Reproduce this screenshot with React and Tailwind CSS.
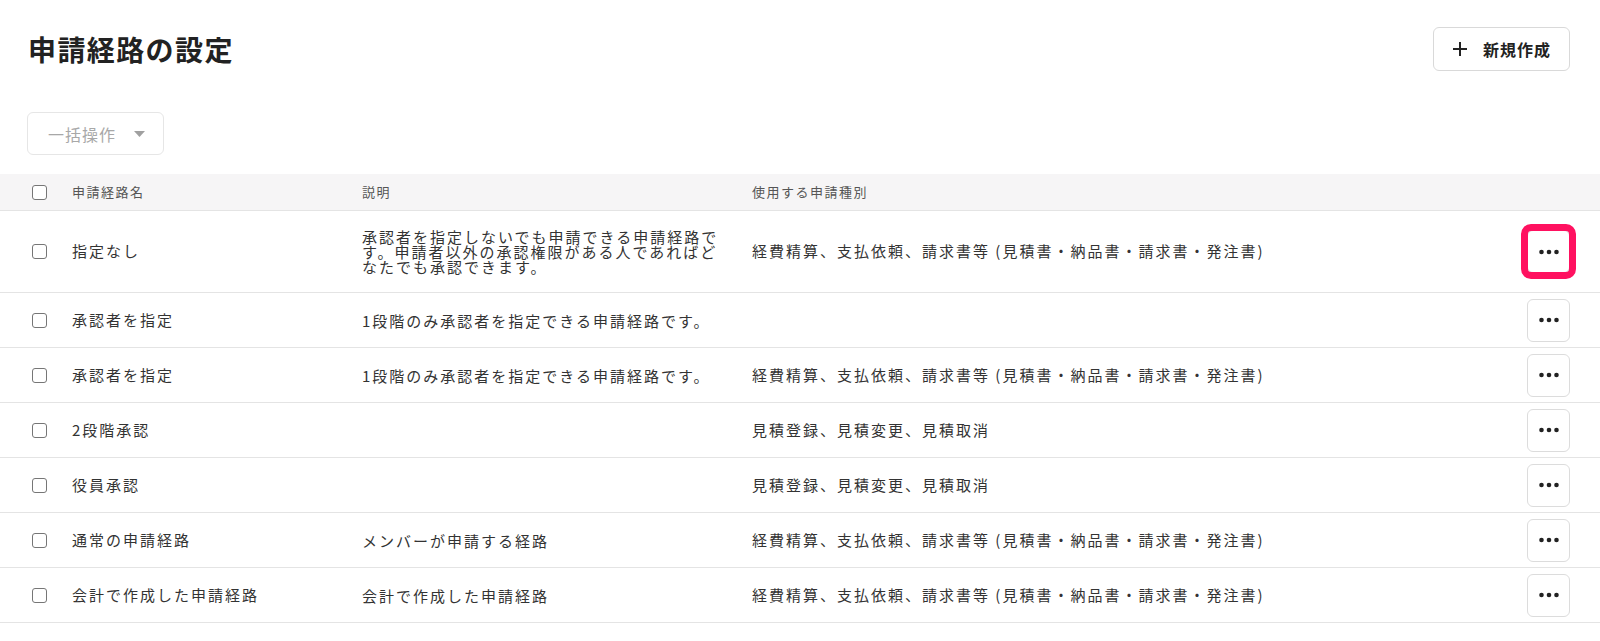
import React from "react";

const font = { fontFamily: '"Noto Sans CJK JP", "Noto Sans", sans-serif' };

const rows = [
  {
    name: "指定なし",
    desc: "承認者を指定しないでも申請できる申請経路です。申請者以外の承認権限がある人であればどなたでも承認できます。",
    type: "経費精算、支払依頼、請求書等 (見積書・納品書・請求書・発注書)",
    tall: true,
    highlight: true,
  },
  { name: "承認者を指定", desc: "1段階のみ承認者を指定できる申請経路です。", type: "" },
  {
    name: "承認者を指定",
    desc: "1段階のみ承認者を指定できる申請経路です。",
    type: "経費精算、支払依頼、請求書等 (見積書・納品書・請求書・発注書)",
  },
  { name: "2段階承認", desc: "", type: "見積登録、見積変更、見積取消" },
  { name: "役員承認", desc: "", type: "見積登録、見積変更、見積取消" },
  {
    name: "通常の申請経路",
    desc: "メンバーが申請する経路",
    type: "経費精算、支払依頼、請求書等 (見積書・納品書・請求書・発注書)",
  },
  {
    name: "会計で作成した申請経路",
    desc: "会計で作成した申請経路",
    type: "経費精算、支払依頼、請求書等 (見積書・納品書・請求書・発注書)",
  },
];

function Checkbox() {
  return (
    <div className="w-[15px] h-[15px] shrink-0 rounded-[3px] border-[1.5px] border-[#767676] bg-white" />
  );
}

function Dots() {
  return (
    <svg width="20" height="6" viewBox="0 0 20 6">
      <circle cx="2.5" cy="3" r="2.3" fill="#222" />
      <circle cx="10" cy="3" r="2.3" fill="#222" />
      <circle cx="17.5" cy="3" r="2.3" fill="#222" />
    </svg>
  );
}

export default function App() {
  return (
    <div className="w-[1600px] h-[641px] bg-white text-[#333] overflow-hidden" style={font}>
      <div className="flex items-center justify-between pl-[28px] pr-[30px] pt-[27px]">
        <h1 className="text-[28px] leading-[44px] font-bold tracking-[1.4px] text-[#222]">
          申請経路の設定
        </h1>
        <button className="flex items-center h-[44px] w-[137px] pl-[18px] rounded-[6px] border border-[#d9d9d9] bg-white">
          <svg width="16" height="16" viewBox="0 0 16 16" className="shrink-0">
            <path d="M8 1v14M1 8h14" stroke="#222" strokeWidth="2" />
          </svg>
          <span className="ml-[15px] text-[16px] font-bold tracking-[1px] text-[#222]">新規作成</span>
        </button>
      </div>

      <div className="pl-[27px] mt-[41px]">
        <button className="flex items-center h-[43px] w-[137px] pl-[20px] rounded-[6px] border border-[#e6e6e6] bg-white">
          <span className="text-[16px] tracking-[1px] text-[#a8a8a8]">一括操作</span>
          <svg width="11" height="6" viewBox="0 0 11 6" className="ml-[18px]">
            <path d="M0 0h11L5.5 6z" fill="#a0a0a0" />
          </svg>
        </button>
      </div>

      <div className="mt-[19px]">
        <div className="flex items-center h-[37px] border-b border-[#e4e4e4] bg-[#f6f5f6] pl-[32px] pr-[30px] text-[13px] tracking-[1.5px] text-[#555]">
          <Checkbox />
          <div className="w-[290px] ml-[25px]">申請経路名</div>
          <div className="w-[390px]">説明</div>
          <div className="flex-1">使用する申請種別</div>
        </div>
        {rows.map((r, i) => (
          <div
            key={i}
            className={
              "flex items-center border-b border-[#e4e4e4] pl-[32px] pr-[30px] text-[15px] tracking-[2px] " +
              (r.tall ? "h-[82px]" : "h-[55px]")
            }
          >
            <Checkbox />
            <div className="w-[290px] ml-[25px]">{r.name}</div>
            <div className="w-[390px] pr-[28px] leading-[15px]">{r.desc}</div>
            <div className="flex-1">{r.type}</div>
            <div className="relative">
              <button className="flex items-center justify-center w-[43px] h-[43px] rounded-[6px] border border-[#dcdcdc] bg-white">
                <Dots />
              </button>
              {r.highlight && (
                <div className="absolute left-[-6px] top-[-6px] w-[55px] h-[55px] rounded-[10px] border-[7px] border-[#ff1160] pointer-events-none" />
              )}
            </div>
          </div>
        ))}
      </div>
    </div>
  );
}
